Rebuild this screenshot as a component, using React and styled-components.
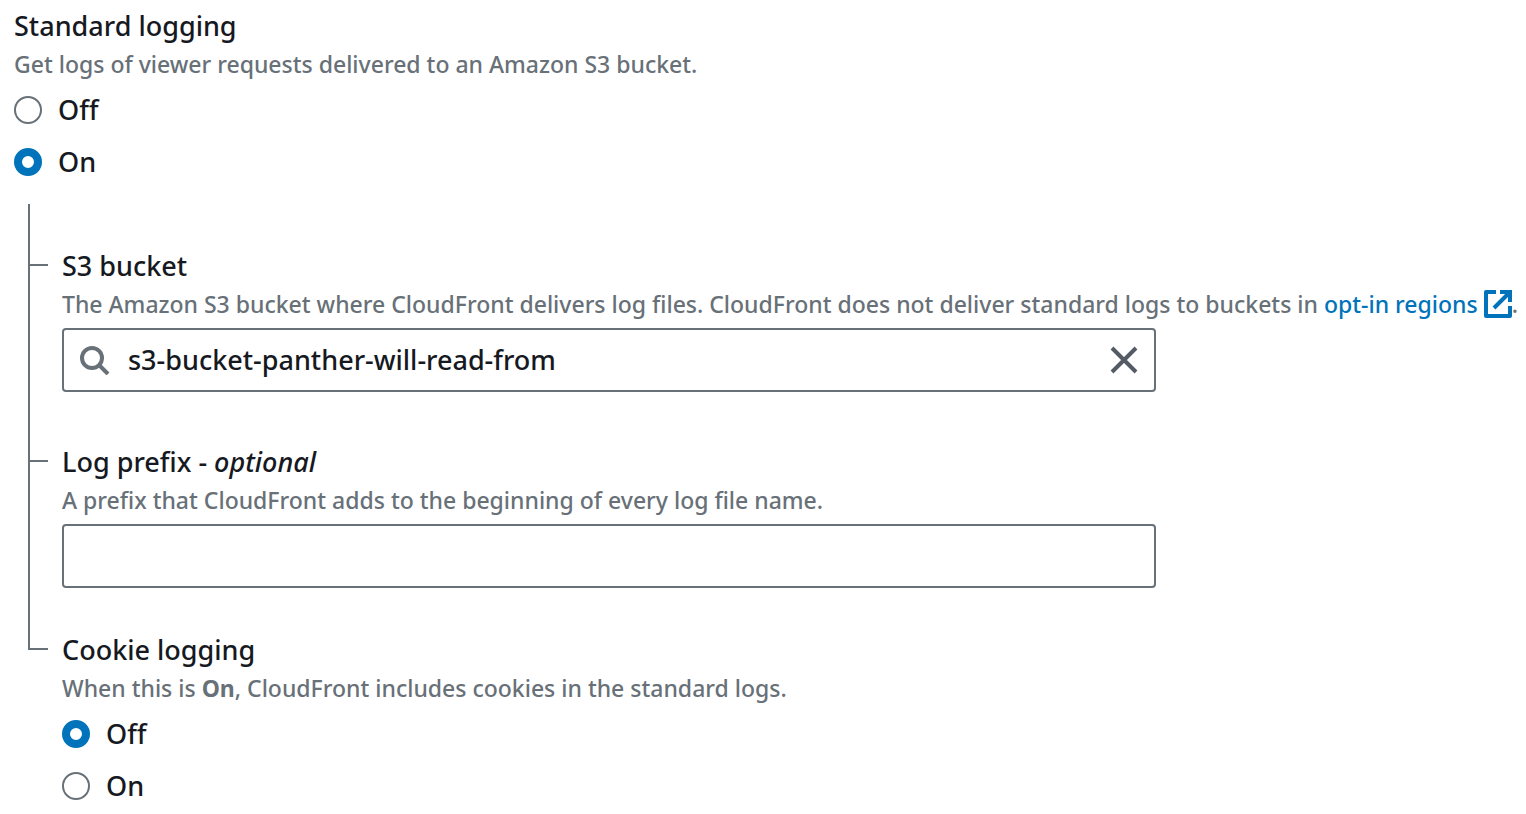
import React, { useState } from "react";
import styled, { createGlobalStyle } from "styled-components";

const color = {
  text: "#16191f",
  muted: "#687078",
  accent: "#0073bb",
  icon: "#545b64",
};

const GlobalStyle = createGlobalStyle`
  *, *::before, *::after { box-sizing: border-box; }
  body {
    margin: 0;
    background: #ffffff;
    color: ${color.text};
    font-family: "Noto Sans", "Open Sans", sans-serif;
    font-size: 27px;
    font-weight: 500;
    line-height: 44px;
  }
`;

const Page = styled.main`
  padding: 4px 6px 6px 14px;
`;

const Group = styled.fieldset`
  margin: 0;
  padding: 0;
  border: 0;
  min-width: 0;
`;

const Legend = styled.legend`
  display: block;
  padding: 0;
`;

const Label = styled.label`
  display: block;
`;

const Description = styled.p`
  margin: 0 0 8px;
  color: ${color.muted};
  font-size: 23px;
  line-height: 32px;
`;

const RadioList = styled.div`
  display: flex;
  flex-direction: column;
  align-items: flex-start;
  gap: 8px;
`;

const RadioLabel = styled.label`
  display: flex;
  align-items: center;
  gap: 16px;
`;

const RadioInput = styled.input`
  appearance: none;
  width: 28px;
  height: 28px;
  margin: 0;
  border: 2px solid ${color.muted};
  border-radius: 50%;
  background: #ffffff;

  &:checked {
    border: 8px solid ${color.accent};
  }
`;

const Tree = styled.div`
  margin: 20px 0 0 14px;
`;

const Branch = styled.div`
  display: flex;
  gap: 14px;
`;

const Connector = styled.div`
  display: flex;
  flex-direction: column;
  flex: 0 0 20px;
`;

const Elbow = styled.div`
  height: ${({ $space }) => $space + 22}px;
  border-left: 2px solid ${color.muted};
  border-bottom: 2px solid ${color.muted};
`;

const Stem = styled.div`
  flex: 1;
  border-left: 2px solid ${color.muted};
`;

const BranchBody = styled.div`
  flex: 1;
  min-width: 0;
  padding-top: ${({ $space }) => $space}px;
`;

const FieldBox = styled.div`
  display: flex;
  align-items: center;
  gap: 18px;
  width: 75%;
  height: 64px;
  padding: 0 16px;
  border: 2px solid ${color.muted};
  border-radius: 4px;
`;

const TextInput = styled.input`
  flex: 1;
  min-width: 0;
  padding: 0;
  border: 0;
  outline: 0;
  background: transparent;
  color: inherit;
  font: inherit;
`;

const ClearButton = styled.button`
  display: flex;
  padding: 0;
  border: 0;
  background: none;
  color: ${color.icon};
  cursor: pointer;
`;

const Link = styled.a`
  color: ${color.accent};
  text-decoration: none;
`;

const LinkIcon = styled.svg`
  margin-left: 6px;
  vertical-align: -5px;
`;

function Radios({ name, value, onChange }) {
  return (
    <RadioList>
      {["Off", "On"].map((option) => (
        <RadioLabel key={option}>
          <RadioInput
            type="radio"
            name={name}
            value={option}
            checked={value === option}
            onChange={() => onChange(option)}
          />
          {option}
        </RadioLabel>
      ))}
    </RadioList>
  );
}

function TreeBranch({ space, last, children }) {
  return (
    <Branch>
      <Connector>
        <Elbow $space={space} />
        {!last && <Stem />}
      </Connector>
      <BranchBody $space={space}>{children}</BranchBody>
    </Branch>
  );
}

function SearchIcon() {
  return (
    <svg width="30" height="30" viewBox="0 0 30 30" fill="none" stroke={color.muted} strokeWidth="4" aria-hidden="true">
      <circle cx="12" cy="13" r="10" />
      <path d="M19 20l9 9" />
    </svg>
  );
}

function CloseIcon() {
  return (
    <svg width="28" height="28" viewBox="0 0 28 28" fill="none" stroke="currentColor" strokeWidth="4" aria-hidden="true">
      <path d="M2 2l24 24M26 2L2 26" />
    </svg>
  );
}

function ExternalIcon() {
  return (
    <LinkIcon width="28" height="28" viewBox="0 0 28 28" fill="none" stroke="currentColor" strokeWidth="4" aria-hidden="true">
      <path d="M12 2H2v24h24V16" strokeLinejoin="round" />
      <path d="M16 2h10v10M26 2L10 18" />
    </LinkIcon>
  );
}

export default function App() {
  const [logging, setLogging] = useState("On");
  const [cookies, setCookies] = useState("Off");
  const [bucket, setBucket] = useState("s3-bucket-panther-will-read-from");
  const [prefix, setPrefix] = useState("");

  return (
    <>
      <GlobalStyle />
      <Page>
        <Group>
          <Legend>Standard logging</Legend>
          <Description>Get logs of viewer requests delivered to an Amazon S3 bucket.</Description>
          <Radios name="standard-logging" value={logging} onChange={setLogging} />
        </Group>
        <Tree>
          <TreeBranch space={40}>
            <Label htmlFor="bucket">S3 bucket</Label>
            <Description>
              The Amazon S3 bucket where CloudFront delivers log files. CloudFront does not deliver standard logs to
              buckets in{" "}
              <Link href="#opt-in-regions">
                opt-in regions
                <ExternalIcon />
              </Link>
              .
            </Description>
            <FieldBox>
              <SearchIcon />
              <TextInput id="bucket" type="text" value={bucket} onChange={(e) => setBucket(e.target.value)} />
              <ClearButton type="button" aria-label="Clear" onClick={() => setBucket("")}>
                <CloseIcon />
              </ClearButton>
            </FieldBox>
          </TreeBranch>
          <TreeBranch space={48}>
            <Label htmlFor="prefix">
              Log prefix - <em>optional</em>
            </Label>
            <Description>A prefix that CloudFront adds to the beginning of every log file name.</Description>
            <FieldBox>
              <TextInput id="prefix" type="text" value={prefix} onChange={(e) => setPrefix(e.target.value)} />
            </FieldBox>
          </TreeBranch>
          <TreeBranch space={40} last>
            <Group>
              <Legend>Cookie logging</Legend>
              <Description>
                When this is <strong>On</strong>, CloudFront includes cookies in the standard logs.
              </Description>
              <Radios name="cookie-logging" value={cookies} onChange={setCookies} />
            </Group>
          </TreeBranch>
        </Tree>
      </Page>
    </>
  );
}
